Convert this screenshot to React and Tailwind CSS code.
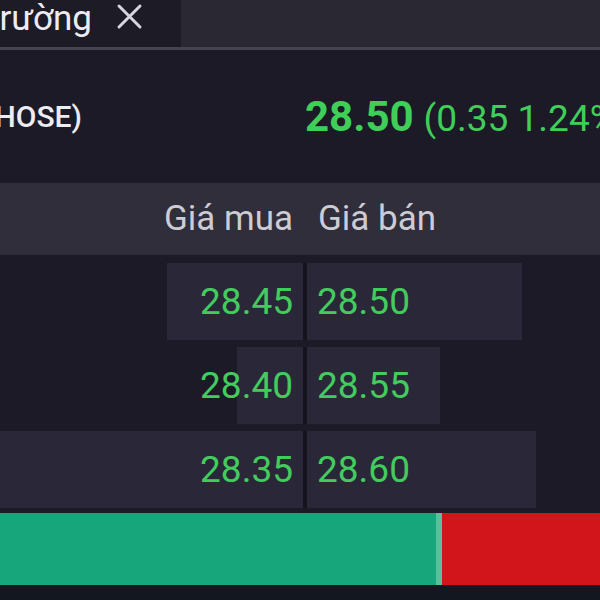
import React from 'react';

const rows = [
  { bid: '28.45', ask: '28.50', bidW: 'w-[136px]', askW: 'w-[215px]' },
  { bid: '28.40', ask: '28.55', bidW: 'w-[66px]', askW: 'w-[133px]' },
  { bid: '28.35', ask: '28.60', bidW: 'w-[303px]', askW: 'w-[229px]' },
];

const App = () => {
  return (
    <div className="w-[600px] h-[600px] overflow-hidden bg-[#1c1a27] font-['Roboto',sans-serif]">
      {/* Tabs */}
      <div className="h-[47px] flex bg-[#2a2833]">
        <div className="w-[181px] h-full bg-[#1d1b26] flex items-start justify-end overflow-hidden pt-[1px] pr-[38px]">
          <span className="whitespace-nowrap text-[35px] leading-none text-[#ececf2]">Thị trường</span>
          <svg className="ml-[24px] mt-[2px] shrink-0" width="27" height="27" viewBox="0 0 27 27" fill="none" stroke="#d6d6de" strokeWidth="3" strokeLinecap="round">
            <path d="M3 3 L24 24 M24 3 L3 24" />
          </svg>
        </div>
      </div>
      <div className="h-[3px] bg-[#464451]" />

      {/* Stock info */}
      <div className="h-[133px] flex items-center">
        <div className="w-[82px] shrink-0 flex justify-end overflow-hidden">
          <span className="whitespace-nowrap text-[30px] font-medium text-[#ececf2]">VNM (HOSE)</span>
        </div>
        <div className="ml-[223px] shrink-0 flex items-baseline whitespace-nowrap text-[#3fcf58]">
          <span className="text-[42px] font-bold">28.50</span>
          <span className="ml-[10px] text-[37px]">(0.35 1.24%)</span>
        </div>
      </div>

      {/* Header */}
      <div className="h-[72px] flex items-center bg-[#302e3a] text-[35px] text-[#cdccd4]">
        <div className="w-[303px] flex justify-end pr-[10px]">Giá mua</div>
        <div className="pl-[15px]">Giá bán</div>
      </div>

      {/* Order book */}
      <div className="flex flex-col gap-[7px] pt-[8px]">
        {rows.map((r) => (
          <div key={r.bid} className="h-[77px] flex text-[37px] text-[#43cc5e]">
            <div className="w-[303px] grid">
              <div className={`[grid-area:1/1] justify-self-end ${r.bidW} h-full bg-[#2a2838]`} />
              <div className="[grid-area:1/1] flex items-center justify-end pr-[10px]">{r.bid}</div>
            </div>
            <div className="w-[4px] bg-[#15131e]" />
            <div className="flex-1 grid">
              <div className={`[grid-area:1/1] ${r.askW} h-full bg-[#2a2838]`} />
              <div className="[grid-area:1/1] flex items-center pl-[10px]">{r.ask}</div>
            </div>
          </div>
        ))}
      </div>

      {/* Buy / sell pressure */}
      <div className="mt-[5px] h-[72px] flex">
        <div className="w-[442px] h-full bg-[#17a57b] border-r-[6px] border-[#5cbf9c]" />
        <div className="flex-1 h-full bg-[#d2141b]" />
      </div>
      <div className="h-full bg-[#131720]" />
    </div>
  );
};

export default App;
